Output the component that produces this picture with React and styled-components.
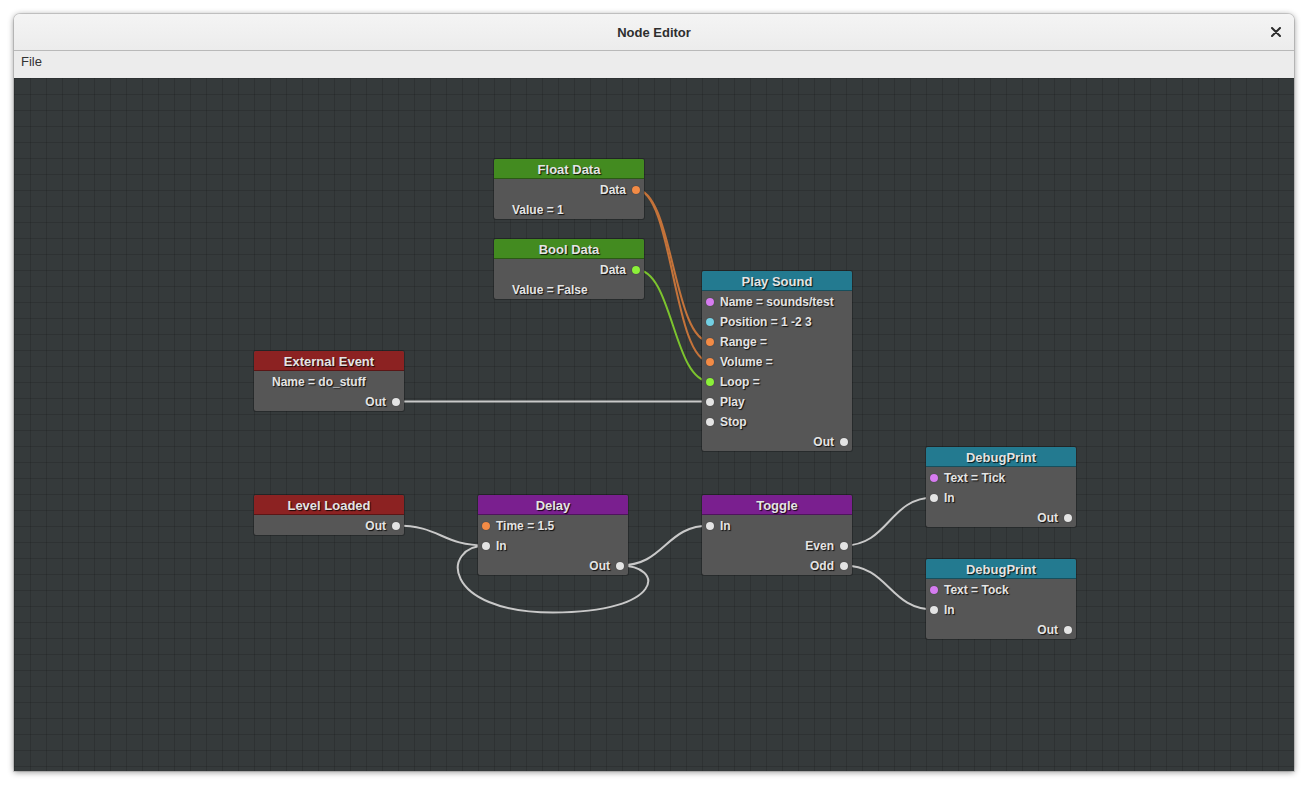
import React from 'react'
import styled, { createGlobalStyle } from 'styled-components'

const GlobalStyle = createGlobalStyle`
  html, body {
    margin: 0;
    background: #ffffff;
    font-family: "Liberation Sans", Arial, sans-serif;
  }
`

const Page = styled.div`
  padding: 14px 16px 16px 14px;
  height: 787px;
  box-sizing: border-box;
`

const Window = styled.div`
  width: 1280px;
  height: 757px;
  display: flex;
  flex-direction: column;
  border-radius: 6px 6px 0 0;
  overflow: hidden;
  box-shadow: 0 1px 6px rgba(0, 0, 0, 0.45), 0 0 0 1px rgba(0, 0, 0, 0.12);
`

const TitleBar = styled.div`
  height: 36px;
  flex: none;
  display: flex;
  align-items: center;
  justify-content: center;
  position: relative;
  background: linear-gradient(#f4f4f4, #ececec);
  border-bottom: 1px solid #b9b9b9;
`

const Title = styled.span`
  font-size: 13px;
  font-weight: bold;
  color: #2e2e2e;
`

const CloseButton = styled.button`
  position: absolute;
  right: 12px;
  top: 12px;
  width: 12px;
  height: 12px;
  padding: 0;
  border: 0;
  background: none;
  display: flex;
  align-items: center;
  justify-content: center;
`

const MenuBar = styled.div`
  height: 27px;
  flex: none;
  background: #ececec;
  display: flex;
  align-items: flex-start;
  padding: 3px 7px 0;
  box-sizing: border-box;
`

const MenuItem = styled.span`
  font-size: 13px;
  color: #333333;
`

const Canvas = styled.div`
  flex: 1;
  position: relative;
  background-color: #353a3b;
  background-image:
    linear-gradient(to right, rgba(0, 0, 0, 0.13) 1px, transparent 1px),
    linear-gradient(to bottom, rgba(0, 0, 0, 0.13) 1px, transparent 1px);
  background-size: 16px 16px;
  overflow: hidden;
`

const Wires = styled.svg`
  position: absolute;
  left: 0;
  top: 0;
  width: 100%;
  height: 100%;
`

const headerColors = {
  data: '#438b20',
  event: '#8c2222',
  flow: '#7a1f8f',
  action: '#237a90'
}

const NodeBox = styled.div`
  position: absolute;
  left: ${p => p.$x}px;
  top: ${p => p.$y}px;
  width: 150px;
  background: #565656;
  border-radius: 2px;
  box-shadow: 0 0 0 1px rgba(0, 0, 0, 0.25);
  color: #e4e4e4;
  text-shadow: 1px 1px 1px rgba(0, 0, 0, 0.85);
`

const NodeHeader = styled.div`
  height: 20px;
  box-sizing: border-box;
  display: flex;
  align-items: center;
  justify-content: center;
  background: ${p => headerColors[p.$kind]};
  border-radius: 2px 2px 0 0;
  border-bottom: 1px solid rgba(0, 0, 0, 0.35);
  font-size: 13px;
  font-weight: bold;
  padding-top: 1px;
`

const Row = styled.div`
  height: 20px;
  box-sizing: border-box;
  padding-top: 1px;
  display: flex;
  align-items: center;
  justify-content: ${p => (p.$out ? 'flex-end' : 'flex-start')};
  padding-left: ${p => (p.$out ? '0' : '4px')};
  padding-right: ${p => (p.$out ? '4px' : '0')};
  font-size: 12px;
  font-weight: bold;
  gap: 6px;
`

const Label = styled.span`
  padding-left: 14px;
`

const dotColors = {
  white: '#e4e4e4',
  orange: '#f28b46',
  cyan: '#73cfe3',
  violet: '#d67cf0',
  green: '#8cf03a'
}

const Dot = styled.span`
  width: 8px;
  height: 8px;
  border-radius: 50%;
  flex: none;
  background: ${p => dotColors[p.$color]};
  box-shadow: 0 0 1px rgba(0, 0, 0, 0.5);
`

const nodes = [
  {
    id: 'float', title: 'Float Data', kind: 'data', x: 480, y: 81,
    rows: [{ out: 'Data', color: 'orange' }, { text: 'Value = 1' }]
  },
  {
    id: 'bool', title: 'Bool Data', kind: 'data', x: 480, y: 161,
    rows: [{ out: 'Data', color: 'green' }, { text: 'Value = False' }]
  },
  {
    id: 'sound', title: 'Play Sound', kind: 'action', x: 688, y: 193,
    rows: [
      { in: 'Name = sounds/test', color: 'violet' },
      { in: 'Position = 1 -2 3', color: 'cyan' },
      { in: 'Range =', color: 'orange' },
      { in: 'Volume =', color: 'orange' },
      { in: 'Loop =', color: 'green' },
      { in: 'Play', color: 'white' },
      { in: 'Stop', color: 'white' },
      { out: 'Out', color: 'white' }
    ]
  },
  {
    id: 'ext', title: 'External Event', kind: 'event', x: 240, y: 273,
    rows: [{ text: 'Name = do_stuff' }, { out: 'Out', color: 'white' }]
  },
  {
    id: 'level', title: 'Level Loaded', kind: 'event', x: 240, y: 417,
    rows: [{ out: 'Out', color: 'white' }]
  },
  {
    id: 'delay', title: 'Delay', kind: 'flow', x: 464, y: 417,
    rows: [
      { in: 'Time = 1.5', color: 'orange' },
      { in: 'In', color: 'white' },
      { out: 'Out', color: 'white' }
    ]
  },
  {
    id: 'toggle', title: 'Toggle', kind: 'flow', x: 688, y: 417,
    rows: [
      { in: 'In', color: 'white' },
      { out: 'Even', color: 'white' },
      { out: 'Odd', color: 'white' }
    ]
  },
  {
    id: 'tick', title: 'DebugPrint', kind: 'action', x: 912, y: 369,
    rows: [
      { in: 'Text = Tick', color: 'violet' },
      { in: 'In', color: 'white' },
      { out: 'Out', color: 'white' }
    ]
  },
  {
    id: 'tock', title: 'DebugPrint', kind: 'action', x: 912, y: 481,
    rows: [
      { in: 'Text = Tock', color: 'violet' },
      { in: 'In', color: 'white' },
      { out: 'Out', color: 'white' }
    ]
  }
]

const links = [
  { from: ['float', 0], to: ['sound', 2], color: '#c4733a' },
  { from: ['float', 0], to: ['sound', 3], color: '#c4733a' },
  { from: ['bool', 0], to: ['sound', 4], color: '#7cc42e' },
  { from: ['ext', 1], to: ['sound', 5], color: '#c9c9c9' },
  { from: ['level', 0], to: ['delay', 1], color: '#c9c9c9' },
  { from: ['delay', 2], to: ['toggle', 0], color: '#c9c9c9' },
  { from: ['delay', 2], to: ['delay', 1], color: '#c9c9c9' },
  { from: ['toggle', 1], to: ['tick', 1], color: '#c9c9c9' },
  { from: ['toggle', 2], to: ['tock', 1], color: '#c9c9c9' }
]

const portPos = ([id, row], side) => {
  const n = nodes.find(node => node.id === id)
  return {
    x: n.x + (side === 'out' ? 142 : 8),
    y: n.y + 30.5 + row * 20
  }
}

const wirePath = (a, b) => {
  if (b.x >= a.x) {
    const d = Math.max(30, (b.x - a.x) * 0.5)
    return `M${a.x},${a.y} C${a.x + d},${a.y} ${b.x - d},${b.y} ${b.x},${b.y}`
  }
  // wire going backwards: loop under the node
  const low = Math.max(a.y, b.y) + 47
  const mid = (a.x + b.x) / 2
  return `M${a.x},${a.y} C${a.x + 45},${a.y} ${a.x + 45},${low} ${mid},${low} ` +
    `C${b.x - 45},${low} ${b.x - 45},${b.y} ${b.x},${b.y}`
}

const Node = ({ node }) => (
  <NodeBox $x={node.x} $y={node.y}>
    <NodeHeader $kind={node.kind}>{node.title}</NodeHeader>
    {node.rows.map((row, i) => {
      if (row.out) {
        return <Row key={i} $out>
          <span>{row.out}</span>
          <Dot $color={row.color} />
        </Row>
      }
      if (row.in) {
        return <Row key={i}>
          <Dot $color={row.color} />
          <span>{row.in}</span>
        </Row>
      }
      return <Row key={i}><Label>{row.text}</Label></Row>
    })}
  </NodeBox>
)

export default function App() {
  return (
    <Page>
      <GlobalStyle />
      <Window>
        <TitleBar>
          <Title>Node Editor</Title>
          <CloseButton aria-label="Close">
            <svg width="10" height="10" viewBox="0 0 10 10">
              <path d="M1 1 L9 9 M9 1 L1 9" stroke="#2b2b2b" strokeWidth="2" strokeLinecap="round" />
            </svg>
          </CloseButton>
        </TitleBar>
        <MenuBar>
          <MenuItem>File</MenuItem>
        </MenuBar>
        <Canvas>
          <Wires>
            {links.map((l, i) =>
              <path key={i}
                d={wirePath(portPos(l.from, 'out'), portPos(l.to, 'in'))}
                fill="none"
                stroke={l.color}
                strokeWidth="2" />)}
          </Wires>
          {nodes.map(n => <Node key={n.id} node={n} />)}
        </Canvas>
      </Window>
    </Page>
  )
}
